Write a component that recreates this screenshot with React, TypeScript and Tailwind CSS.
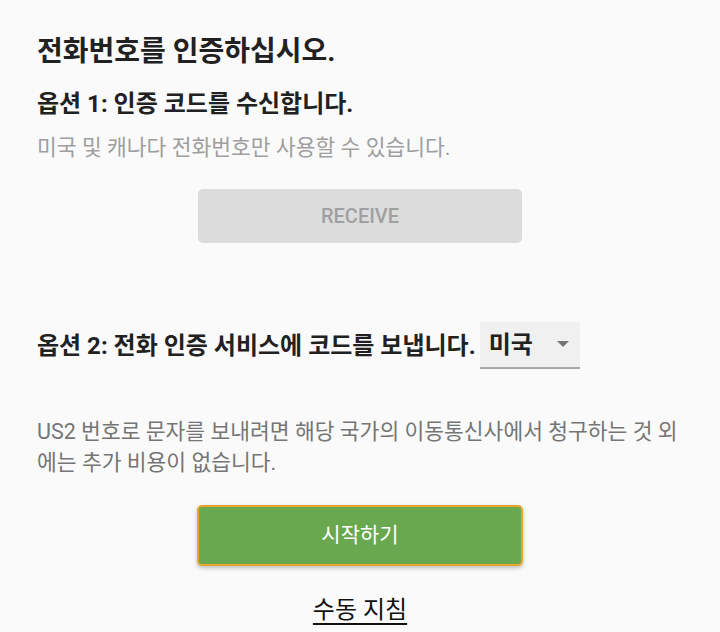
export default function App() {
  return (
    <div
      className="min-h-[632px] w-[720px] bg-[#fafafa] px-[37px] pt-[36px] text-[#212121]"
      style={{ fontFamily: "Roboto, 'Noto Sans CJK KR', sans-serif" }}
    >
      <h1 className="text-[28px] font-bold leading-[32px]">전화번호를 인증하십시오.</h1>
      <h2 className="mt-[21px] text-[24px] font-bold leading-[30px]">옵션 1: 인증 코드를 수신합니다.</h2>
      <p className="mt-[15px] text-[21.5px] leading-[28px] text-[#9e9e9e]">
        미국 및 캐나다 전화번호만 사용할 수 있습니다.
      </p>
      <div className="mt-[27px] flex justify-center">
        <button className="flex h-[54px] w-[324px] items-center justify-center rounded-[5px] bg-[#dcdcdc] text-[20px] font-medium text-[#a0a0a0]">
          RECEIVE
        </button>
      </div>
      <div className="mt-[79px] flex h-[47px] items-center">
        <span className="whitespace-nowrap text-[24px] font-bold leading-[30px]">옵션 2: 전화 인증 서비스에 코드를 보냅니다.</span>
        <div className="ml-[4px] flex h-[47px] w-[100px] shrink-0 items-center justify-between border-b-2 border-[#a8a8a8] bg-[#f0f0f0] pl-[9px] pr-[11px]">
          <span className="text-[24px] font-bold">미국</span>
          <svg width="12" height="7" viewBox="0 0 12 7">
            <path d="M0 0 L12 0 L6 6 Z" fill="#757575" />
          </svg>
        </div>
      </div>
      <p className="mt-[47px] whitespace-nowrap text-[21.5px] leading-[31px] text-[#757575]">
        US2 번호로 문자를 보내려면 해당 국가의 이동통신사에서 청구하는 것 외
        <br />
        에는 추가 비용이 없습니다.
      </p>
      <div className="mt-[27px] flex justify-center">
        <button className="flex h-[61px] w-[326px] items-center justify-center rounded-[5px] border-2 border-[#e8a530] bg-[#6aa84f] text-[21px] text-white shadow-[0_2px_4px_rgba(0,0,0,0.25)]">
          시작하기
        </button>
      </div>
      <div className="mt-[29px] flex justify-center">
        <a className="text-[24px] leading-[30px] text-[#111] underline underline-offset-[5px]">수동 지침</a>
      </div>
    </div>
  );
}
